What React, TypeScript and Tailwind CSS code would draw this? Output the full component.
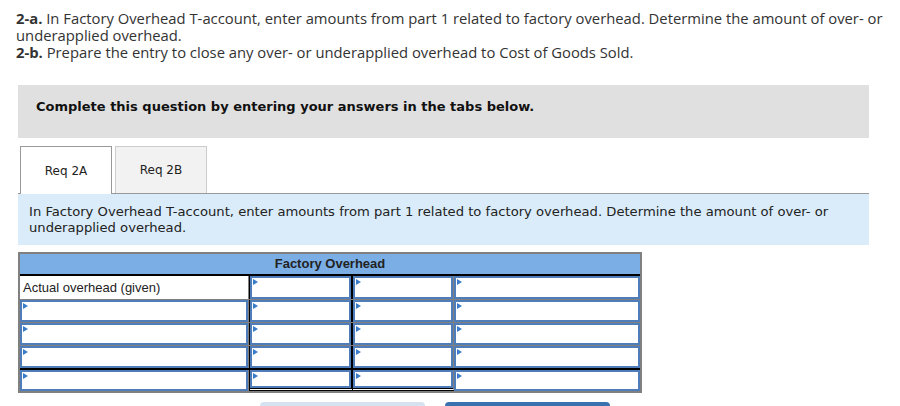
import React from "react";

const Marker = () => (
  <span className="absolute left-[1px] top-[1px] w-0 h-0 border-t-[3px] border-b-[3px] border-l-[5px] border-t-transparent border-b-transparent border-l-[#3b7cc9]" />
);

const InputCell = () => (
  <div className="relative h-full bg-white border-2 border-[#4e7db9]">
    <Marker />
  </div>
);

export default function App() {
  const rows = [0, 1, 2, 3, 4];
  return (
    <div className="w-[900px] h-[406px] overflow-hidden bg-white">
      <div className="pl-[16px] pt-[10px] pr-[12px] text-[14.8px] leading-[17px] text-[#333]" style={{ fontFamily: '"Open Sans", sans-serif' }}>
        <p><b>2-a.</b> In Factory Overhead T-account, enter amounts from part 1 related to factory overhead. Determine the amount of over- or underapplied overhead.</p>
        <p><b>2-b.</b> Prepare the entry to close any over- or underapplied overhead to Cost of Goods Sold.</p>
      </div>

      <div className="ml-[18px] w-[851px]" style={{ fontFamily: '"DejaVu Sans", Verdana, sans-serif' }}>
        <div className="mt-[24px] h-[53px] bg-[#e0e0e0] pl-[18px] pt-[14px] text-[13px] leading-[16px] font-bold text-[#111]">
          Complete this question by entering your answers in the tabs below.
        </div>

        <div className="mt-[8px] flex gap-[3px] pl-[2px] border-b border-[#999] h-[48px]">
          <div className="w-[92px] h-[48px] bg-white border border-[#999] border-b-0 flex items-center justify-center text-[12px] text-[#222] relative z-10">
            Req 2A
          </div>
          <div className="w-[92px] h-[47px] bg-[#f2f2f2] border border-[#ccc] border-b-0 flex items-center justify-center text-[12px] text-[#222]">
            Req 2B
          </div>
        </div>

        <div className="h-[51px] bg-[#daecf9] pl-[11px] pt-[10px] pr-[20px] text-[13.15px] leading-[16px] text-[#222]">
          In Factory Overhead T-account, enter amounts from part 1 related to factory overhead. Determine the amount of over- or underapplied overhead.
        </div>
      </div>

      <div className="ml-[18px] mt-[7px] w-[624px] border-2 border-[#808080]" style={{ fontFamily: '"Liberation Sans", Arial, sans-serif' }}>
        <div className="h-[22px] bg-[#7aaee4] border-b-2 border-black flex items-center justify-center text-[13px] font-bold text-[#222]">
          Factory Overhead
        </div>
        {rows.map((r) => (
          <div
            key={r}
            className={
              "grid grid-cols-[229px_104px_101px_186px] h-[23px] " +
              (r === 4 ? "border-t-2 border-black" : r > 0 ? "border-t border-[#808080]" : "")
            }
          >
            {r === 0 ? (
              <div className="h-full bg-white flex items-center pl-[3px] text-[13px] text-[#222] border-r border-[#808080]">
                Actual overhead (given)
              </div>
            ) : (
              <div className="h-full border-r border-[#808080]">
                <InputCell />
              </div>
            )}
            <div className={"h-full border-l border-l-black border-r-2 border-r-black " + (r === 4 ? "border-b-[3px] border-b-black [border-bottom-style:double]" : "")}>
              <InputCell />
            </div>
            <div className={"h-full border-r border-r-[#808080] " + (r === 4 ? "border-b-[3px] border-b-black [border-bottom-style:double]" : "")}>
              <InputCell />
            </div>
            <div className="h-full">
              <InputCell />
            </div>
          </div>
        ))}
      </div>

      <div className="flex mt-[9px] ml-[260px] gap-[20px]">
        <div className="w-[165px] h-[30px] bg-[#d6e2f0] rounded-sm" />
        <div className="w-[165px] h-[30px] bg-[#3a72b0] rounded-sm" />
      </div>
    </div>
  );
}
